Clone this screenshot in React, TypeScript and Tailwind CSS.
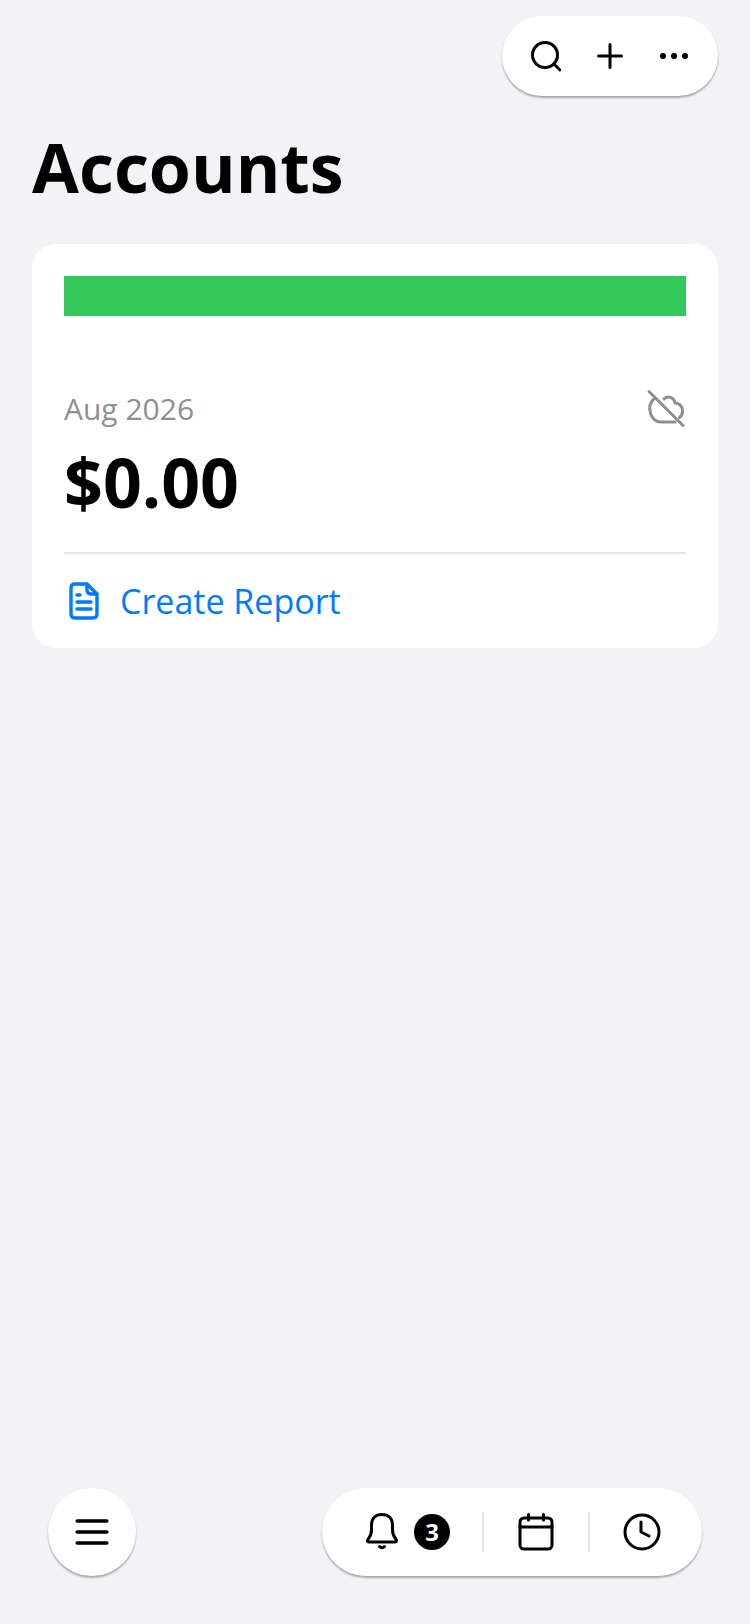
import React from "react";

function SearchIcon() {
  return (
    <svg width="32" height="32" viewBox="0 0 32 32" fill="none" stroke="#000" strokeWidth="3" strokeLinecap="round">
      <circle cx="16" cy="15" r="12.5" />
      <path d="M25.5 24.5 L31 30" />
    </svg>
  );
}

function PlusIcon() {
  return (
    <svg width="32" height="32" viewBox="0 0 32 32" fill="none" stroke="#000" strokeWidth="3" strokeLinecap="round">
      <path d="M16 4.500 V27.500 M4.500 16 H27.500" />
    </svg>
  );
}

function DotsIcon() {
  return (
    <svg width="32" height="32" viewBox="0 0 32 32" fill="#000">
      <circle cx="4" cy="16" r="3" />
      <circle cx="15" cy="16" r="3" />
      <circle cx="26" cy="16" r="3" />
    </svg>
  );
}

function CloudOffIcon() {
  return (
    <svg width="40" height="40" viewBox="0 0 40 40" fill="none" stroke="#8e8e93" strokeWidth="3" strokeLinecap="round" strokeLinejoin="round">
      <path d="M3 2.500 L37 36.500" />
      <path d="M7.500 10.500 C3.500 14 3 19 4.500 24.500 C6.500 30 10.500 33 15 33 H29" />
      <path d="M18 10 C22 6.500 28 8 29 14 C33.500 14 37 18 36.500 22.500 C36.500 25 35.500 27 33.500 28.500" />
    </svg>
  );
}

function DocIcon() {
  return (
    <svg width="30" height="38" viewBox="0 0 30 38" fill="none" stroke="#007aff" strokeWidth="3.4" strokeLinecap="round" strokeLinejoin="round">
      <path d="M18 2 H6 C3.500 2 2 3.500 2 6 V32 C2 34.500 3.500 36 6 36 H24 C26.500 36 28 34.500 28 32 V12 Z" />
      <path d="M18 2 V8 C18 10.500 19.500 12 22 12 H28" />
      <path d="M8 13 H11 M8 20 H22 M8 27 H22" />
    </svg>
  );
}

function BellIcon() {
  return (
    <svg width="36" height="38" viewBox="0 0 36 38" fill="none" stroke="#000" strokeWidth="3" strokeLinecap="round" strokeLinejoin="round">
      <path d="M3.500 27.500 C3.500 26 7.500 24 7.500 17 V12 C7.500 5.500 11.500 1.500 18 1.500 C24.500 1.500 28.500 5.500 28.500 12 V17 C28.500 24 32.500 26 32.500 27.500 C32.500 28.500 32 29 31 29 H5 C4 29 3.500 28.500 3.500 27.500 Z" />
      <path d="M15.500 33.500 C17 35 19 35 20.500 33.500" />
    </svg>
  );
}

function CalendarIcon() {
  return (
    <svg width="36" height="38" viewBox="0 0 36 38" fill="none" stroke="#000" strokeWidth="3" strokeLinecap="round" strokeLinejoin="round">
      <rect x="2" y="5" width="32" height="31" rx="4" />
      <path d="M2 14 H34 M10.500 1.500 V7 M25.500 1.500 V7" />
    </svg>
  );
}

function ClockIcon() {
  return (
    <svg width="38" height="38" viewBox="0 0 38 38" fill="none" stroke="#000" strokeWidth="3" strokeLinecap="round" strokeLinejoin="round">
      <circle cx="19" cy="19" r="17" />
      <path d="M18 9 V19 L26 23" />
    </svg>
  );
}

function MenuIcon() {
  return (
    <svg width="36" height="28" viewBox="0 0 36 28" fill="none" stroke="#000" strokeWidth="3.6" strokeLinecap="round">
      <path d="M3.200 3 H32.800 M3.200 14 H32.800 M3.200 25 H32.800" />
    </svg>
  );
}

export default function App() {
  return (
    <div className="h-[1624px] flex flex-col bg-[#f2f2f7] font-['Open_Sans',sans-serif] text-black overflow-hidden">
      {/* Top actions */}
      <div className="flex justify-end pt-4 pr-8">
        <div className="flex items-center gap-[33px] h-20 px-[27px] bg-white rounded-full shadow-[0_2px_2px_rgba(0,0,0,0.3)]">
          <SearchIcon />
          <PlusIcon />
          <DotsIcon />
        </div>
      </div>

      <h1 className="mt-[25px] px-8 text-[68px] leading-[92px] font-bold">Accounts</h1>

      {/* Account card */}
      <div className="mx-8 mt-[31px] h-[404px] bg-white rounded-3xl px-8 pt-8">
        <div className="h-10 bg-[#34c759]" />
        <div className="mt-[73px] flex items-center justify-between">
          <span className="text-[30px] leading-10 text-[#8e8e93]">Aug 2026</span>
          <CloudOffIcon />
        </div>
        <div className="mt-[7px] text-[68px] leading-[92px] font-bold">$0.00</div>
        <div className="mt-6 h-0.5 bg-[#e5e5ea]" />
        <div className="mt-[25px] flex items-center gap-[21px] pl-[5px]">
          <DocIcon />
          <span className="text-[34px] leading-[44px] text-[#007aff]">Create Report</span>
        </div>
      </div>

      {/* Bottom bar */}
      <div className="mt-auto mb-12 px-12 flex items-center justify-between">
        <div className="flex items-center justify-center w-[88px] h-[88px] bg-white rounded-full shadow-[0_2px_2px_rgba(0,0,0,0.3)]">
          <MenuIcon />
        </div>
        <div className="flex items-center w-[380px] h-[88px] pl-[42px] bg-white rounded-full shadow-[0_2px_2px_rgba(0,0,0,0.3)]">
          <BellIcon />
          <span className="ml-[14px] flex items-center justify-center w-9 h-9 rounded-full bg-black text-white text-[24px] leading-none font-bold">3</span>
          <div className="ml-[32px] w-0.5 h-10 bg-[#e5e5ea]" />
          <div className="ml-[34px]">
            <CalendarIcon />
          </div>
          <div className="ml-[34px] w-0.5 h-10 bg-[#e5e5ea]" />
          <div className="ml-[33px]">
            <ClockIcon />
          </div>
        </div>
      </div>
    </div>
  );
}
